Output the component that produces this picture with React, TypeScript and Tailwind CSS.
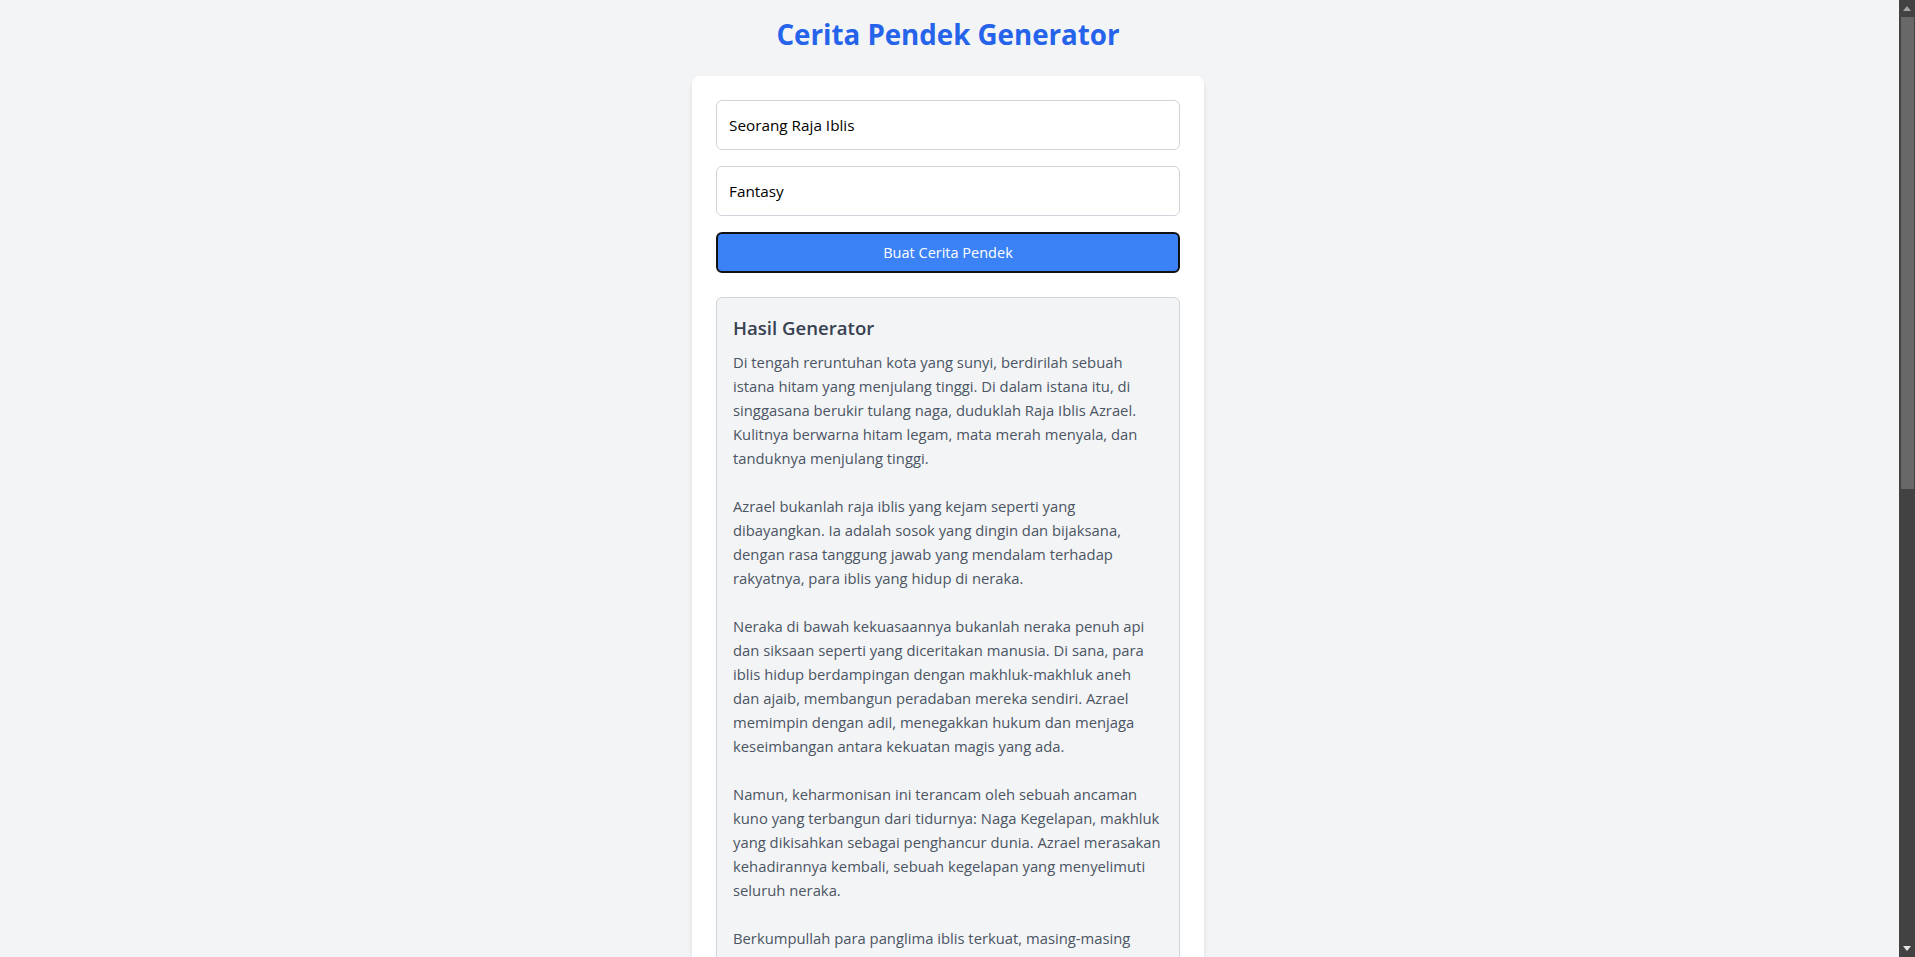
import { useState } from 'react';

const story = `Di tengah reruntuhan kota yang sunyi, berdirilah sebuah istana hitam yang menjulang tinggi. Di dalam istana itu, di singgasana berukir tulang naga, duduklah Raja Iblis Azrael. Kulitnya berwarna hitam legam, mata merah menyala, dan tanduknya menjulang tinggi.

Azrael bukanlah raja iblis yang kejam seperti yang dibayangkan. Ia adalah sosok yang dingin dan bijaksana, dengan rasa tanggung jawab yang mendalam terhadap rakyatnya, para iblis yang hidup di neraka.

Neraka di bawah kekuasaannya bukanlah neraka penuh api dan siksaan seperti yang diceritakan manusia. Di sana, para iblis hidup berdampingan dengan makhluk-makhluk aneh dan\u00a0ajaib, membangun peradaban mereka sendiri. Azrael memimpin dengan adil, menegakkan hukum dan menjaga keseimbangan antara kekuatan magis yang ada.

Namun, keharmonisan ini terancam oleh sebuah ancaman kuno yang terbangun dari tidurnya: Naga Kegelapan, makhluk yang dikisahkan sebagai penghancur dunia. Azrael merasakan kehadirannya kembali, sebuah kegelapan yang menyelimuti seluruh neraka.

Berkumpullah para panglima iblis terkuat, masing-masing memiliki keahlian dan kekuatan yang unik. Azrael tahu bahwa hanya dengan bersatu mereka dapat menghadapi Naga Kegelapan. Ia memerintahkan pasukannya untuk bersiap, sementara ia sendiri mencari petunjuk di perpustakaan kuno istana.

Di antara gulungan-gulungan tua yang berdebu, Azrael menemukan sebuah ramalan. Ramalan itu menyebutkan bahwa Naga Kegelapan hanya dapat dikalahkan oleh seseorang yang memiliki hati yang murni, sesuatu yang mustahil dimiliki oleh seorang iblis.

Azrael termenung. Selama ribuan tahun, ia telah memimpin dengan akal dan kekuatan, bukan dengan hati. Namun, ia teringat pada seorang gadis manusia bernama Lyra, yang dulu tersesat ke neraka dan ia selamatkan tanpa alasan yang jelas.

Dengan tekad bulat, Azrael membuka gerbang antara neraka dan dunia manusia. Ia menemukan Lyra di sebuah desa kecil, merawat anak-anak yatim dengan penuh kasih sayang. Awalnya Lyra ketakutan, tetapi tatapan Azrael yang tulus meyakinkannya untuk ikut.

Pertempuran besar pun terjadi di lembah api. Para panglima iblis menahan serangan Naga Kegelapan, sementara Azrael melindungi Lyra dengan seluruh kekuatannya. Ketika Lyra menyentuh sisik naga itu, cahaya putih memancar dari tangannya dan kegelapan perlahan sirna.

Naga Kegelapan pun lenyap, meninggalkan keheningan di seluruh neraka. Sejak hari itu, Azrael belajar bahwa kekuatan sejati tidak hanya berasal dari kekuasaan, tetapi juga dari hati yang berani peduli. Dan untuk pertama kalinya, Raja Iblis itu tersenyum.`;

// classic scrollbar as it shows in the screenshot
function Scrollbar() {
  return (
    <div className="fixed top-0 right-0 flex h-screen w-[16px] flex-col bg-[#424242]">
      <div className="flex h-[17px] items-center justify-center">
        <svg width="8" height="5" viewBox="0 0 8 5">
          <path d="M4 0 L8 5 L0 5 Z" fill="#a3a3a3" />
        </svg>
      </div>
      <div className="ml-[2px] h-[472px] w-[13px] bg-[#686868]" />
      <div className="flex-1" />
      <div className="flex h-[17px] items-center justify-center">
        <svg width="8" height="5" viewBox="0 0 8 5">
          <path d="M0 0 L8 0 L4 5 Z" fill="#e5e5e5" />
        </svg>
      </div>
    </div>
  );
}

export default function App() {
  const [character, setCharacter] = useState('Seorang Raja Iblis');
  const [genre, setGenre] = useState('Fantasy');

  return (
    <div className="min-h-screen bg-[#f3f4f6] py-4 pr-[35px] pl-4 font-['Open_Sans',sans-serif]">
      {/* Title */}
      <h1 className="mb-6 text-center text-[27.7px] leading-9 font-bold text-[#2563eb]">
        Cerita Pendek Generator
      </h1>

      <div className="mx-auto max-w-lg rounded-lg bg-white p-6 shadow-md">
        {/* Form */}
        <input
          type="text"
          value={character}
          onChange={(e) => setCharacter(e.target.value)}
          className="mb-4 h-[50px] w-full rounded-md border border-[#d1d5db] px-3 text-[15.3px] text-black outline-none"
        />
        <input
          type="text"
          value={genre}
          onChange={(e) => setGenre(e.target.value)}
          className="mb-4 h-[50px] w-full rounded-md border border-[#d1d5db] px-3 text-[15.3px] text-black outline-none"
        />
        <button className="h-[41px] w-full rounded-md border-2 border-[#111] bg-[#3b82f6] text-[14.5px] text-white">
          Buat Cerita Pendek
        </button>

        {/* Result */}
        <div className="mt-6 rounded-md border border-[#d1d5db] bg-[#f3f4f6] p-4">
          <h2 className="mb-2 text-[18.6px] leading-7 font-semibold text-[#374151]">Hasil Generator</h2>
          <p className="text-[14.8px] leading-6 whitespace-pre-line text-[#4b5563]">{story}</p>
        </div>
      </div>

      <Scrollbar />
    </div>
  );
}
